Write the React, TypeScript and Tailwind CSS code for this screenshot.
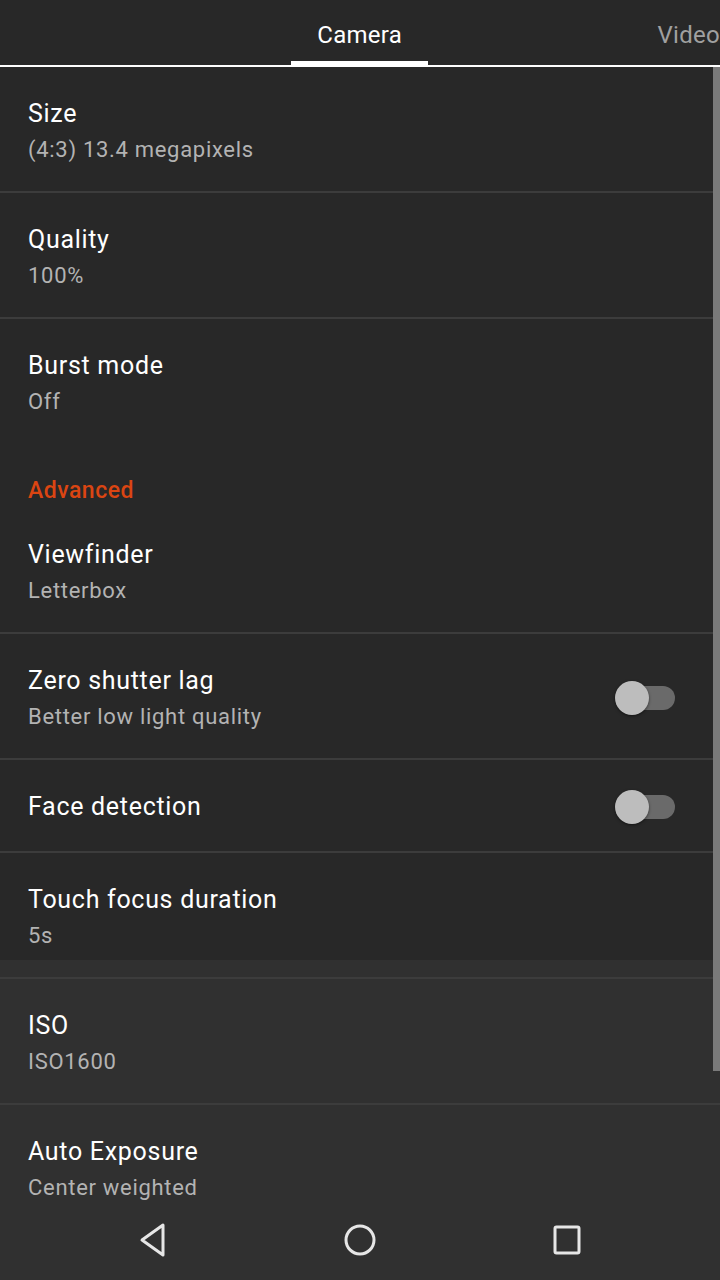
import React from 'react';

type Item = {
  title: string;
  summary?: string;
  toggle?: boolean;
  className?: string;
  divider?: boolean;
};

const Toggle: React.FC = () => (
  <div className="relative w-[60px] h-[32px] flex items-center">
    <div className="absolute left-[4px] right-0 h-[24px] rounded-full bg-[#6a6a6a]" />
    <div className="absolute left-0 w-[34px] h-[34px] rounded-full bg-[#bdbdbd] shadow-[0_1px_3px_rgba(0,0,0,0.5)]" />
  </div>
);

const Row: React.FC<Item> = ({ title, summary, toggle, className = '', divider = true }) => (
  <>
    <div className={`flex items-center pl-[28px] pr-[45px] pt-[31px] ${summary ? 'pb-[27px]' : 'pb-[28px]'} ${className}`}>
      <div className="flex-1">
        <div className="text-[25px] leading-[32px] tracking-[0.7px] text-white">{title}</div>
        {summary && (
          <div className="mt-[6px] text-[22px] leading-[28px] tracking-[0.7px] text-[#b3b3b3]">{summary}</div>
        )}
      </div>
      {toggle && <Toggle />}
    </div>
    {divider && <div className="h-[2px] bg-[#3c3c3c]" />}
  </>
);

const App: React.FC = () => {
  return (
    <div
      className="w-[720px] h-[1280px] flex flex-col overflow-hidden bg-[#282828]"
      style={{ fontFamily: 'Roboto, "Noto Sans", sans-serif' }}
    >
      {/* tabs */}
      <div className="relative h-[67px] flex items-end whitespace-nowrap overflow-hidden shrink-0">
        <div className="ml-[291px] w-[138px] h-full flex flex-col items-center">
          <div className="flex-1 flex items-center text-[24px] tracking-[0.3px] text-white pt-[8px]">Camera</div>
          <div className="w-full h-[6px] bg-white" />
        </div>
        <div className="ml-[229px] h-full flex items-center text-[24px] tracking-[0.3px] text-[#a0a0a0] pt-[8px] pb-[6px]">
          Video
        </div>
        <div className="absolute left-0 right-0 bottom-0 h-[2px] bg-white" />
      </div>

      {/* list */}
      <div className="relative flex-1 overflow-hidden">
        <Row title="Size" summary="(4:3) 13.4 megapixels" />
        <Row title="Quality" summary="100%" />
        <Row title="Burst mode" summary="Off" divider={false} />
        <div className="h-[65px] pl-[28px] pt-[34px] text-[23px] leading-[28px] tracking-[0.5px] font-medium text-[#db4512]">
          Advanced
        </div>
        <Row title="Viewfinder" summary="Letterbox" />
        <Row title="Zero shutter lag" summary="Better low light quality" toggle />
        <Row title="Face detection" toggle />
        <Row
          title="Touch focus duration"
          summary="5s"
          className="bg-[linear-gradient(to_bottom,#282828_107px,#303030_107px)]"
        />
        <div className="bg-[#303030]">
          <Row title="ISO" summary="ISO1600" />
          <Row title="Auto Exposure" summary="Center weighted" divider={false} />
        </div>
        <div className="absolute top-0 right-0 w-[7px] h-[1004px] bg-[#7a7a7a]" />
      </div>

      {/* nav bar */}
      <div className="h-[80px] shrink-0 bg-[#303030] flex items-center justify-center gap-[167px]">
        <svg width="40" height="40" viewBox="0 0 40 40" fill="none" stroke="#e6e6e6" strokeWidth="3" strokeLinejoin="round">
          <path d="M30 5 L30 35 L9 20 Z" />
        </svg>
        <svg width="40" height="40" viewBox="0 0 40 40" fill="none" stroke="#e6e6e6" strokeWidth="3">
          <circle cx="20" cy="20" r="14" />
        </svg>
        <svg width="40" height="40" viewBox="0 0 40 40" fill="none" stroke="#e6e6e6" strokeWidth="3" strokeLinejoin="round">
          <rect x="8" y="7" width="24" height="26" rx="1.5" />
        </svg>
      </div>
    </div>
  );
};

export default App;
